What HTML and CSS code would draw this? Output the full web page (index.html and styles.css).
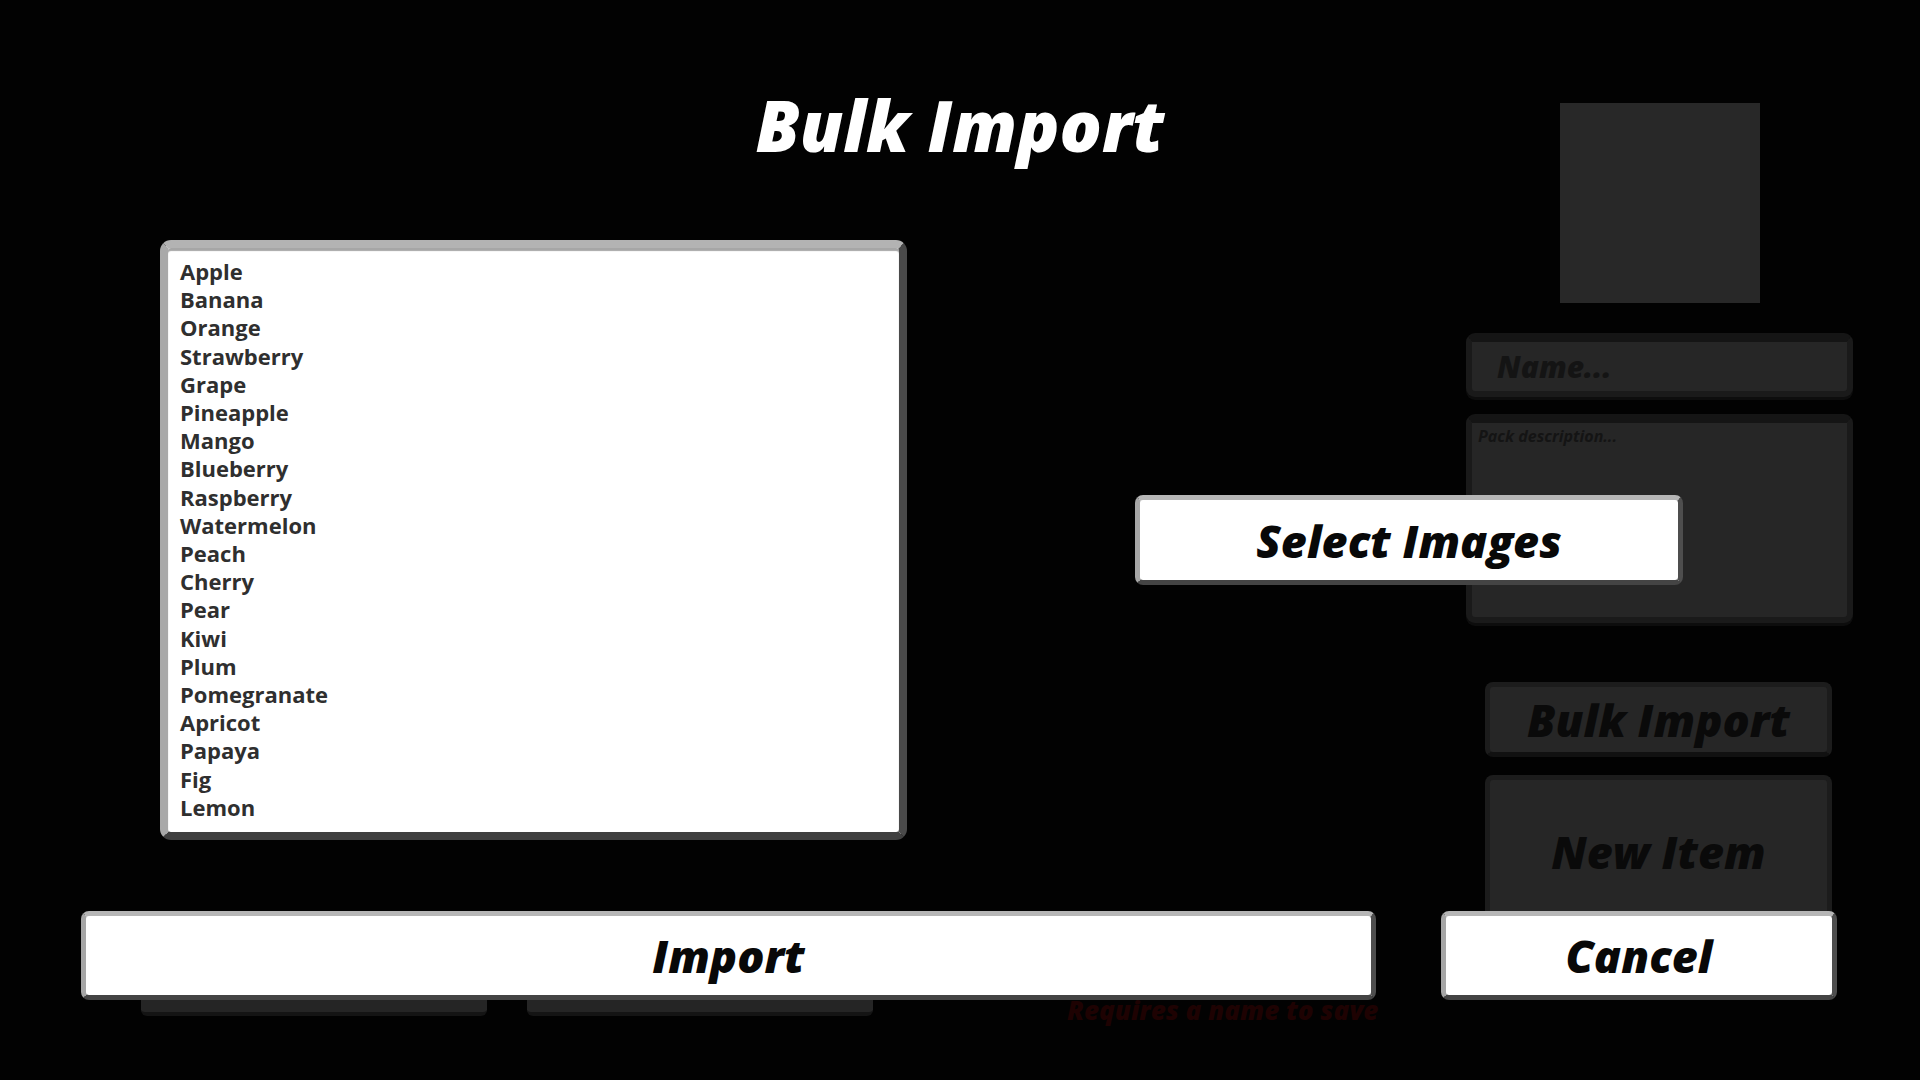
FILE: index.html
```html
<!DOCTYPE html>
<html lang="en">
<head>
<meta charset="utf-8">
<title>Bulk Import</title>
<link rel="stylesheet" href="styles.css">
</head>
<body>
<div class="screen">
  <div class="backdrop">
    <div class="back-left">
      <div class="back-row">
        <div class="back-box"></div>
        <div class="back-box"></div>
        <div class="warn">Requires a name to save</div>
      </div>
    </div>
    <div class="back-right">
      <div class="thumb"></div>
      <div class="field name-field"><span class="ph-name">Name...</span></div>
      <div class="field desc-field"><span class="ph-desc">Pack description...</span></div>
      <div class="dim-btn bulk-btn">Bulk Import</div>
      <div class="dim-btn new-btn">New Item</div>
    </div>
  </div>

  <div class="modal">
    <h1 class="title">Bulk Import</h1>
    <div class="main-row">
      <div class="listbox">
        <ul class="items">
          <li>Apple</li>
          <li>Banana</li>
          <li>Orange</li>
          <li>Strawberry</li>
          <li>Grape</li>
          <li>Pineapple</li>
          <li>Mango</li>
          <li>Blueberry</li>
          <li>Raspberry</li>
          <li>Watermelon</li>
          <li>Peach</li>
          <li>Cherry</li>
          <li>Pear</li>
          <li>Kiwi</li>
          <li>Plum</li>
          <li>Pomegranate</li>
          <li>Apricot</li>
          <li>Papaya</li>
          <li>Fig</li>
          <li>Lemon</li>
        </ul>
      </div>
      <div class="light-btn select-btn">Select Images</div>
    </div>
    <div class="bottom-row">
      <div class="light-btn import-btn">Import</div>
      <div class="light-btn cancel-btn">Cancel</div>
    </div>
  </div>
</div>
</body>
</html>
```
FILE: styles.css
```css
* { box-sizing: border-box; }

html, body {
  margin: 0;
  padding: 0;
  background: #020202;
}

body {
  width: 1920px;
  height: 1080px;
  overflow: hidden;
  font-family: "Open Sans", "Lato", sans-serif;
}

.screen {
  position: relative;
  width: 1920px;
  height: 1080px;
  background: #020202;
}

/* ---------- dimmed page behind the dialog ---------- */
.backdrop {
  display: flex;
  width: 100%;
  height: 100%;
}

.back-left {
  flex: 1;
  display: flex;
  flex-direction: column;
  justify-content: flex-end;
  padding: 0 0 64px 141px;
}

.back-row {
  display: flex;
  align-items: flex-end;
  gap: 40px;
}

.back-box {
  width: 346px;
  height: 80px;
  background: #252525;
  border-radius: 6px;
  border-bottom: 4px solid #141414;
}

.warn {
  margin-left: 154px;
  margin-bottom: -9px;
  font-weight: 800;
  font-style: italic;
  font-size: 26px;
  line-height: 30px;
  color: #1e0202;
  white-space: nowrap;
}

.back-right {
  width: 387px;
  margin-right: 67px;
  display: flex;
  flex-direction: column;
  padding-top: 103px;
}

.thumb {
  width: 200px;
  height: 200px;
  margin-left: 94px;
  background: #282828;
}

.field {
  background: #262626;
  border: 6px solid #1a1a1a;
  border-top-width: 9px;
  border-top-color: #151515;
  border-radius: 9px;
  box-shadow: 0 3px 0 #0d0d0d;
}

.name-field {
  margin-top: 30px;
  height: 64px;
  padding-left: 25px;
  display: flex;
  align-items: center;
}

.ph-name {
  font-size: 30px;
  font-weight: 800;
  font-style: italic;
  color: #141414;
}

.desc-field {
  margin-top: 17px;
  height: 209px;
  padding: 2px 0 0 6px;
}

.ph-desc {
  font-size: 16px;
  font-weight: 700;
  font-style: italic;
  color: #141414;
}

.dim-btn {
  margin-left: 19px;
  width: 347px;
  background: #262626;
  border: 5px solid #1c1c1c;
  border-bottom-color: #111;
  border-radius: 8px;
  display: flex;
  align-items: center;
  justify-content: center;
  font-weight: 800;
  font-style: italic;
  font-size: 45px;
  color: #0a0a0a;
}

.bulk-btn {
  margin-top: 59px;
  height: 75px;
}

.new-btn {
  margin-top: 18px;
  height: 152px;
}

/* ---------- dialog ---------- */
.modal {
  position: absolute;
  inset: 0;
  display: flex;
  flex-direction: column;
}

.title {
  margin: 83px 0 0 0;
  text-align: center;
  font-size: 70px;
  line-height: 84px;
  font-weight: 800;
  font-style: italic;
  color: #ffffff;
}

.main-row {
  margin-top: 73px;
  padding-left: 160px;
  display: flex;
  align-items: center;
  gap: 228px;
}

.listbox {
  width: 747px;
  height: 600px;
  background: #ffffff;
  border: 8px solid;
  border-color: #b3b3b3 #4a4a4a #404040 #a9a9a9;
  border-radius: 11px;
  box-shadow: inset 0 3px 1px rgba(0, 0, 0, 0.35);
  padding: 9px 0 0 12px;
  overflow: hidden;
}

.items {
  list-style: none;
  margin: 0;
  padding: 0;
}

.items li {
  font-size: 22px;
  line-height: 28.2px;
  font-weight: 700;
  color: #2f2f2f;
}

.light-btn {
  background: #ffffff;
  border: 5px solid;
  border-color: #b6b6b6 #4e4e4e #444444 #a6a6a6;
  border-radius: 8px;
  display: flex;
  align-items: center;
  justify-content: center;
  font-weight: 800;
  font-style: italic;
  color: #080808;
}

.select-btn {
  width: 548px;
  height: 90px;
  font-size: 45px;
}

.bottom-row {
  margin-top: 71px;
  padding-left: 81px;
  display: flex;
  gap: 65px;
}

.import-btn {
  width: 1295px;
  height: 89px;
  font-size: 45px;
}

.cancel-btn {
  width: 396px;
  height: 89px;
  font-size: 45px;
}
```
